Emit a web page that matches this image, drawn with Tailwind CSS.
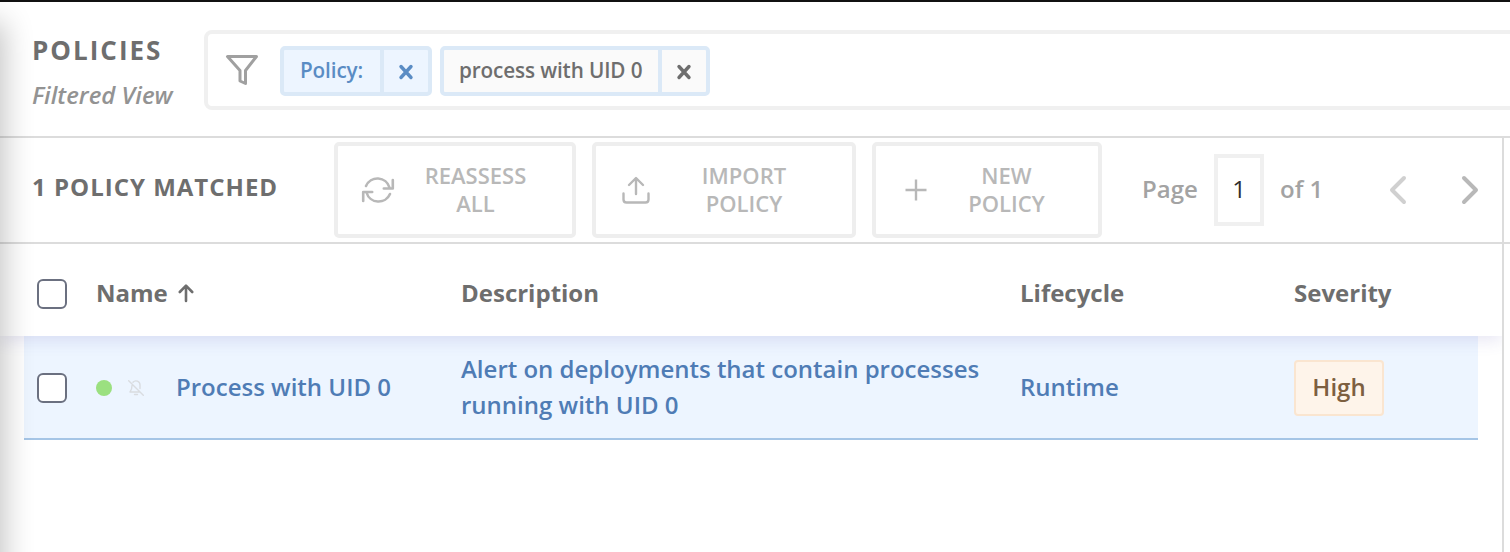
<!DOCTYPE html>
<html lang="en">
<head>
<meta charset="utf-8">
<title>Policies</title>
<script src="https://cdn.jsdelivr.net/npm/@tailwindcss/browser@4"></script>
</head>
<body class="relative h-[552px] w-[1510px] overflow-hidden border-t-2 border-[#111] bg-white font-['Open_Sans',sans-serif] text-2xl font-semibold whitespace-nowrap text-[#6e6e6e]">
  <header class="flex h-[136px] border-b-2 border-[#dcdcdc] pt-7 pl-8">
    <div class="w-[172px] shrink-0">
      <h1 class="text-[26px] leading-10 font-bold tracking-[2px]">POLICIES</h1>
      <p class="mt-1 leading-[42px] font-semibold text-[#939393] italic">Filtered View</p>
    </div>
    <div class="flex h-20 w-[1320px] shrink-0 items-center rounded-lg border-4 border-[#f0f0f0] pl-4">
      <svg class="h-9 w-9 shrink-0" viewBox="0 0 36 36" fill="none" stroke="#a0a0a0" stroke-width="3" stroke-linejoin="round"><path d="M3.500 4.500h29L21.500 18.500v13l-5.500-2.500V18.500z"/></svg>
      <div class="mt-0.5 ml-5 flex h-[50px] rounded-[5px] border-4 border-[#dbe9f7] bg-[#edf5ff] text-[20.700px] tracking-[-0.12px] text-[#5a8cc4]">
        <span class="w-[96px] pl-4 leading-10">Policy:</span>
        <span class="flex w-12 items-center justify-center border-l-4 border-[#dbe9f7]"><svg class="mt-0.5 h-4 w-4" viewBox="0 0 16 16" fill="none" stroke="#5a8cc4" stroke-width="3.400" stroke-linecap="round"><path d="M3 2.500l10 11M13 2.500L3 13.500"/></svg></span>
      </div>
      <div class="mt-0.5 ml-2 flex h-[50px] rounded-[5px] border-4 border-[#dbe9f7] bg-[#fafafa] text-[20.700px] tracking-[-0.12px] text-[#6e6e6e]">
        <span class="w-[214px] pl-[15px] leading-10">process with UID 0</span>
        <span class="flex w-12 items-center justify-center border-l-4 border-[#dbe9f7]"><svg class="mt-0.5 h-4 w-4" viewBox="0 0 16 16" fill="none" stroke="#6e6e6e" stroke-width="3.400" stroke-linecap="round"><path d="M3 2.500l10 11M13 2.500L3 13.500"/></svg></span>
      </div>
    </div>
  </header>

  <section class="flex h-[106px] items-start border-b-2 border-[#dcdcdc] pl-8">
    <h2 class="w-[302px] shrink-0 pt-[31px] leading-9 font-bold tracking-[1px]">1 POLICY MATCHED</h2>
    <div class="mt-1 flex gap-4 text-center text-[22px] leading-7 text-[#b8b8b8]">
      <button class="flex h-24 w-[242px] items-center rounded-[5px] border-4 border-[#eeeeee] pl-5">
        <svg class="h-10 w-10" viewBox="0 0 40 40" fill="none" stroke="#b8b8b8" stroke-width="2.600" stroke-linecap="round" stroke-linejoin="round"><path d="M8 16A12.500 12.500 0 0 1 31.500 17.500M34.800 10v8.500h-9M32 24A12.500 12.500 0 0 1 8.500 22.500M5.200 31V22h9"/></svg>
        <span class="w-[155px] pb-0.5">REASSESS<br>ALL</span>
      </button>
      <button class="flex h-24 w-[264px] items-center rounded-[5px] border-4 border-[#eeeeee] pl-5">
        <svg class="h-10 w-10" viewBox="0 0 40 40" fill="none" stroke="#b8b8b8" stroke-width="2.400" stroke-linecap="round" stroke-linejoin="round"><path d="M20 24V8.500M13 15l7-7 7 7M7.500 23.500v6q0 3 3 3h19q3 0 3-3v-6"/></svg>
        <span class="w-[176px] pb-0.5">IMPORT<br>POLICY</span>
      </button>
      <button class="flex h-24 w-[230px] items-center rounded-[5px] border-4 border-[#eeeeee] pl-5">
        <svg class="h-10 w-10" viewBox="0 0 40 40" fill="none" stroke="#b8b8b8" stroke-width="2.400"><path d="M20 9.500v21M9.500 20h21"/></svg>
        <span class="w-[141px] pb-0.5">NEW<br>POLICY</span>
      </button>
    </div>
    <nav class="ml-10 flex h-[104px] items-center text-[#a3a3a3]">
      <span class="w-[72px] pb-0.5">Page</span>
      <span class="flex h-[72px] w-[50px] items-center justify-center border-4 border-[#f0f0f0] pb-0.5 font-normal text-[#2e2e2e]">1</span>
      <span class="ml-4 w-[104px] pb-0.5">of 1</span>
      <svg class="h-10 w-10" viewBox="0 0 40 40" fill="none" stroke="#d0d0d0" stroke-width="4" stroke-linecap="round" stroke-linejoin="round"><path d="M20 8L8 20l12 12"/></svg>
      <svg class="ml-8 h-10 w-10" viewBox="0 0 40 40" fill="none" stroke="#b8b8b8" stroke-width="4" stroke-linecap="round" stroke-linejoin="round"><path d="M8 8l12 12L8 32"/></svg>
    </nav>
  </section>

  <main class="h-[308px] w-[1504px] overflow-hidden border-r-2 border-[#dcdcdc]">
    <div class="relative grid h-[92px] grid-cols-[461px_559px_274px_1fr] items-center bg-white pt-[7px] pb-0.5 font-bold shadow-[0_4px_16px_rgba(80,70,170,0.14)]">
      <div class="flex items-center pl-[37px]">
        <span class="mt-0.5 h-[30px] w-[30px] rounded-[6px] border-[2.500px] border-[#6b7080] bg-white"></span>
        <span class="ml-[29px]">Name</span>
        <svg class="ml-2.5 h-5 w-4" viewBox="0 0 16 20" fill="none" stroke="#6e6e6e" stroke-width="2.600" stroke-linecap="round" stroke-linejoin="round"><path d="M8 18V3M1.800 9L8 2.700l6.200 6.300"/></svg>
      </div>
      <span>Description</span><span>Lifecycle</span><span>Severity</span>
    </div>
    <div class="ml-6 grid h-[104px] w-[1454px] grid-cols-[437px_559px_274px_1fr] items-center border-b-2 border-[#a5c5e6] bg-[#edf5ff] text-[#4f7cb5]">
      <div class="flex items-center pl-[13px]">
        <span class="mt-0.5 h-[30px] w-[30px] rounded-[6px] border-[2.500px] border-[#6b7080] bg-white"></span>
        <span class="mt-0.5 ml-[29px] h-4 w-4 rounded-full bg-[#9be080]"></span>
        <svg class="mt-0.5 ml-4 h-4 w-4" viewBox="0 0 16 16" fill="none" stroke="#d9dce0" stroke-width="1.400" stroke-linecap="round" stroke-linejoin="round"><path d="M.7.700l14.600 14.600M5 2.300A4 4 0 0 1 12 5v3.500M4 5.500C4 8.500 3.500 10 2 12h9.500M6.500 14.500h3"/></svg>
        <span class="ml-8">Process with UID 0</span>
      </div>
      <span class="leading-9">Alert on deployments that contain processes<br>running with UID 0</span>
      <span>Runtime</span>
      <span class="mt-0.5 flex h-14 w-[90px] items-center justify-center rounded border-2 border-[#fae5d0] bg-[#fef4ea] pb-0.5 text-[#7d5f40]">High</span>
    </div>
  </main>
  <div class="absolute top-[136px] right-1.5 h-[106px] w-0.5 bg-[#dcdcdc]"></div>
  <div class="pointer-events-none absolute top-4 -bottom-10 -left-10 w-10 shadow-[4px_4px_30px_rgba(0,0,0,0.24)]"></div>
</body>
</html>
